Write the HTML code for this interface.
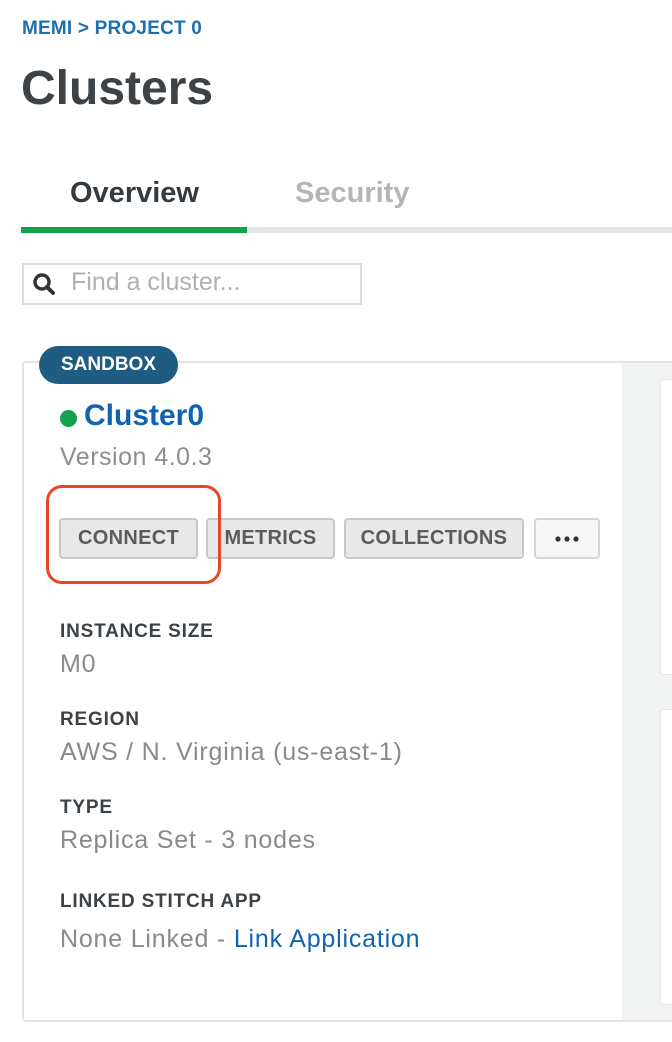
<!DOCTYPE html>
<html><head><meta charset="utf-8"><style>
*{margin:0;padding:0;box-sizing:border-box}
body{width:672px;height:1042px;background:#fff;font-family:"Liberation Sans",sans-serif;position:relative;overflow:hidden;color:#3d4f58}
.a{position:absolute;white-space:nowrap}
.bc{left:22px;top:18px;font-size:19px;font-weight:bold;color:#1b6fb5;letter-spacing:0.2px}
.h1{left:21px;top:61px;font-size:48px;font-weight:bold;color:#3d4246}
.tab{top:177px;font-size:29px;font-weight:bold}
.search{left:22px;top:263px;width:340px;height:42px;border:2px solid #ddd}
.card{left:22px;top:361px;width:680px;height:661px;border:2px solid #e2e4e4;border-radius:4px;overflow:hidden}
.gray{position:absolute;left:598px;top:0;width:100px;height:100%;background:#f1f2f2}
.inner{position:absolute;left:636px;width:60px;background:#fff;border:1px solid #e6e8e8;border-radius:4px}
.badge{left:39px;top:346px;width:139px;height:38px;background:#1f5c82;border-radius:19px;color:#fff;font-size:19px;font-weight:bold;text-align:center;line-height:38px}
.btn{top:518px;height:41px;border:2px solid #c8c8c8;border-radius:4px;background:#e8e8e8;color:#5b5b5b;font-size:20px;font-weight:bold;text-align:center;line-height:37px;letter-spacing:0.3px}
.lbl{left:60px;font-size:19px;font-weight:bold;color:#3d4246;letter-spacing:0.8px}
.val{left:60px;font-size:25px;color:#8a8a8a;letter-spacing:0.8px}
</style></head><body>
<div class="a bc">MEMI &gt; PROJECT 0</div>
<div class="a h1">Clusters</div>
<div class="a tab" style="left:70px;color:#333b40">Overview</div>
<div class="a tab" style="left:295px;color:#b5b5b5">Security</div>
<div class="a" style="left:21px;top:227px;width:651px;height:6px;background:#e3e5e4"></div>
<div class="a" style="left:21px;top:227px;width:226px;height:6px;background:#13a34a"></div>
<div class="a search"></div>
<svg class="a" style="left:32px;top:272px" width="26" height="26" viewBox="0 0 26 26"><circle cx="10" cy="10" r="7" fill="none" stroke="#333" stroke-width="3.4"/><path d="M15 15l6 6" stroke="#333" stroke-width="4" stroke-linecap="round"/></svg>
<div class="a" style="left:71px;top:268px;font-size:25px;color:#b0b0b0">Find a cluster...</div>
<div class="a card"><div class="gray"></div><div class="inner" style="top:16px;height:296px"></div><div class="inner" style="top:346px;height:296px"></div></div>
<div class="a badge">SANDBOX</div>
<div class="a" style="left:60px;top:410px;width:17px;height:17px;border-radius:50%;background:#13a34a"></div>
<div class="a" style="left:84px;top:399px;font-size:30px;font-weight:bold;color:#1163b0">Cluster0</div>
<div class="a" style="left:60px;top:443px;font-size:25px;color:#8e8e8e;letter-spacing:0.5px">Version 4.0.3</div>
<div class="a btn" style="left:59px;width:139px">CONNECT</div>
<div class="a btn" style="left:206px;width:129px">METRICS</div>
<div class="a btn" style="left:344px;width:180px">COLLECTIONS</div>
<div class="a btn" style="left:534px;width:66px;background:#f6f6f6;border-color:#d6d6d6"><svg width="62" height="37" viewBox="0 0 62 37" style="display:block"><circle cx="22" cy="19" r="2.6" fill="#333"/><circle cx="31" cy="19" r="2.6" fill="#333"/><circle cx="40" cy="19" r="2.6" fill="#333"/></svg></div>
<div class="a" style="left:46px;top:485px;width:175px;height:99px;border:3px solid #e5472a;border-radius:16px"></div>
<div class="a lbl" style="top:621px">INSTANCE SIZE</div>
<div class="a val" style="top:650px">M0</div>
<div class="a lbl" style="top:709px">REGION</div>
<div class="a val" style="top:738px">AWS / N. Virginia (us-east-1)</div>
<div class="a lbl" style="top:797px">TYPE</div>
<div class="a val" style="top:826px">Replica Set - 3 nodes</div>
<div class="a lbl" style="top:891px">LINKED STITCH APP</div>
<div class="a val" style="top:925px">None Linked - <span style="color:#1163b0">Link Application</span></div>
</body></html>
